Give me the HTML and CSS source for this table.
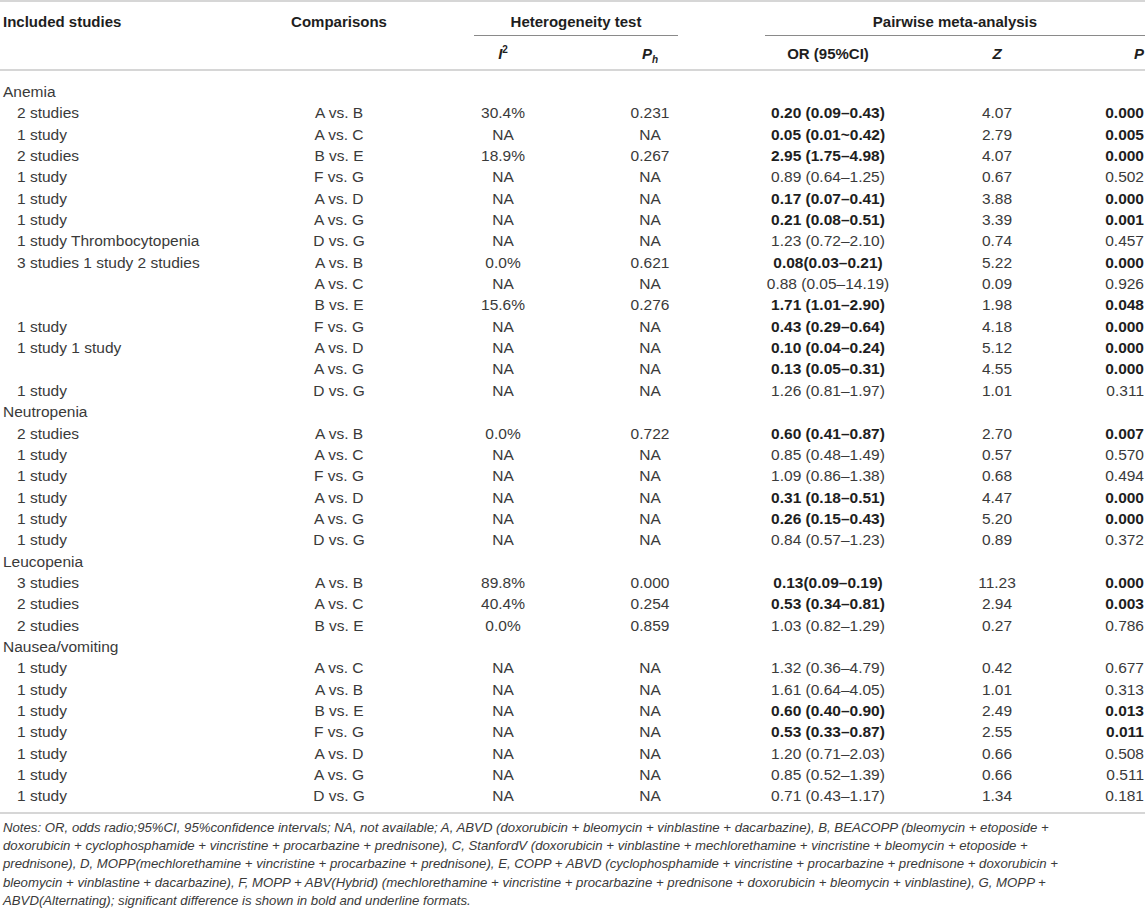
FILE: index.html
```html
<!DOCTYPE html>
<html lang="en">
<head>
    <meta charset="UTF-8">
    <title>Pairwise meta-analysis of adverse events</title>
    <link rel="stylesheet" href="styles.css">
</head>
<body>
    <table class="results">
        <colgroup>
            <col class="c-study">
            <col class="c-comp">
            <col class="c-i2">
            <col class="c-ph">
            <col class="c-or">
            <col class="c-z">
            <col class="c-p">
        </colgroup>
        <thead>
            <tr class="head-top">
                <th class="left">Included studies</th>
                <th>Comparisons</th>
                <th colspan="2"><div class="span-het">Heterogeneity test</div></th>
                <th colspan="3"><div class="span-pair">Pairwise meta-analysis</div></th>
            </tr>
            <tr class="head-sub">
                <th></th>
                <th></th>
                <th><i>I</i><sup>2</sup></th>
                <th><i>P</i><sub>h</sub></th>
                <th>OR (95%CI)</th>
                <th><i>Z</i></th>
                <th class="right"><i>P</i></th>
            </tr>
        </thead>
        <tbody>
            <tr class="group first"><td colspan="7">Anemia</td></tr>
            <tr><td class="sub">2 studies</td><td>A vs. B</td><td>30.4%</td><td>0.231</td><td><b>0.20 (0.09–0.43)</b></td><td>4.07</td><td class="right"><b>0.000</b></td></tr>
            <tr><td class="sub">1 study</td><td>A vs. C</td><td>NA</td><td>NA</td><td><b>0.05 (0.01~0.42)</b></td><td>2.79</td><td class="right"><b>0.005</b></td></tr>
            <tr><td class="sub">2 studies</td><td>B vs. E</td><td>18.9%</td><td>0.267</td><td><b>2.95 (1.75–4.98)</b></td><td>4.07</td><td class="right"><b>0.000</b></td></tr>
            <tr><td class="sub">1 study</td><td>F vs. G</td><td>NA</td><td>NA</td><td>0.89 (0.64–1.25)</td><td>0.67</td><td class="right">0.502</td></tr>
            <tr><td class="sub">1 study</td><td>A vs. D</td><td>NA</td><td>NA</td><td><b>0.17 (0.07–0.41)</b></td><td>3.88</td><td class="right"><b>0.000</b></td></tr>
            <tr><td class="sub">1 study</td><td>A vs. G</td><td>NA</td><td>NA</td><td><b>0.21 (0.08–0.51)</b></td><td>3.39</td><td class="right"><b>0.001</b></td></tr>
            <tr><td class="sub">1 study Thrombocytopenia</td><td>D vs. G</td><td>NA</td><td>NA</td><td>1.23 (0.72–2.10)</td><td>0.74</td><td class="right">0.457</td></tr>
            <tr><td class="sub">3 studies 1 study 2 studies</td><td>A vs. B</td><td>0.0%</td><td>0.621</td><td><b>0.08(0.03–0.21)</b></td><td>5.22</td><td class="right"><b>0.000</b></td></tr>
            <tr><td class="sub"></td><td>A vs. C</td><td>NA</td><td>NA</td><td>0.88 (0.05–14.19)</td><td>0.09</td><td class="right">0.926</td></tr>
            <tr><td class="sub"></td><td>B vs. E</td><td>15.6%</td><td>0.276</td><td><b>1.71 (1.01–2.90)</b></td><td>1.98</td><td class="right"><b>0.048</b></td></tr>
            <tr><td class="sub">1 study</td><td>F vs. G</td><td>NA</td><td>NA</td><td><b>0.43 (0.29–0.64)</b></td><td>4.18</td><td class="right"><b>0.000</b></td></tr>
            <tr><td class="sub">1 study 1 study</td><td>A vs. D</td><td>NA</td><td>NA</td><td><b>0.10 (0.04–0.24)</b></td><td>5.12</td><td class="right"><b>0.000</b></td></tr>
            <tr><td class="sub"></td><td>A vs. G</td><td>NA</td><td>NA</td><td><b>0.13 (0.05–0.31)</b></td><td>4.55</td><td class="right"><b>0.000</b></td></tr>
            <tr><td class="sub">1 study</td><td>D vs. G</td><td>NA</td><td>NA</td><td>1.26 (0.81–1.97)</td><td>1.01</td><td class="right">0.311</td></tr>

            <tr class="group"><td colspan="7">Neutropenia</td></tr>
            <tr><td class="sub">2 studies</td><td>A vs. B</td><td>0.0%</td><td>0.722</td><td><b>0.60 (0.41–0.87)</b></td><td>2.70</td><td class="right"><b>0.007</b></td></tr>
            <tr><td class="sub">1 study</td><td>A vs. C</td><td>NA</td><td>NA</td><td>0.85 (0.48–1.49)</td><td>0.57</td><td class="right">0.570</td></tr>
            <tr><td class="sub">1 study</td><td>F vs. G</td><td>NA</td><td>NA</td><td>1.09 (0.86–1.38)</td><td>0.68</td><td class="right">0.494</td></tr>
            <tr><td class="sub">1 study</td><td>A vs. D</td><td>NA</td><td>NA</td><td><b>0.31 (0.18–0.51)</b></td><td>4.47</td><td class="right"><b>0.000</b></td></tr>
            <tr><td class="sub">1 study</td><td>A vs. G</td><td>NA</td><td>NA</td><td><b>0.26 (0.15–0.43)</b></td><td>5.20</td><td class="right"><b>0.000</b></td></tr>
            <tr><td class="sub">1 study</td><td>D vs. G</td><td>NA</td><td>NA</td><td>0.84 (0.57–1.23)</td><td>0.89</td><td class="right">0.372</td></tr>

            <tr class="group"><td colspan="7">Leucopenia</td></tr>
            <tr><td class="sub">3 studies</td><td>A vs. B</td><td>89.8%</td><td>0.000</td><td><b>0.13(0.09–0.19)</b></td><td>11.23</td><td class="right"><b>0.000</b></td></tr>
            <tr><td class="sub">2 studies</td><td>A vs. C</td><td>40.4%</td><td>0.254</td><td><b>0.53 (0.34–0.81)</b></td><td>2.94</td><td class="right"><b>0.003</b></td></tr>
            <tr><td class="sub">2 studies</td><td>B vs. E</td><td>0.0%</td><td>0.859</td><td>1.03 (0.82–1.29)</td><td>0.27</td><td class="right">0.786</td></tr>

            <tr class="group"><td colspan="7">Nausea/vomiting</td></tr>
            <tr><td class="sub">1 study</td><td>A vs. C</td><td>NA</td><td>NA</td><td>1.32 (0.36–4.79)</td><td>0.42</td><td class="right">0.677</td></tr>
            <tr><td class="sub">1 study</td><td>A vs. B</td><td>NA</td><td>NA</td><td>1.61 (0.64–4.05)</td><td>1.01</td><td class="right">0.313</td></tr>
            <tr><td class="sub">1 study</td><td>B vs. E</td><td>NA</td><td>NA</td><td><b>0.60 (0.40–0.90)</b></td><td>2.49</td><td class="right"><b>0.013</b></td></tr>
            <tr><td class="sub">1 study</td><td>F vs. G</td><td>NA</td><td>NA</td><td><b>0.53 (0.33–0.87)</b></td><td>2.55</td><td class="right"><b>0.011</b></td></tr>
            <tr><td class="sub">1 study</td><td>A vs. D</td><td>NA</td><td>NA</td><td>1.20 (0.71–2.03)</td><td>0.66</td><td class="right">0.508</td></tr>
            <tr><td class="sub">1 study</td><td>A vs. G</td><td>NA</td><td>NA</td><td>0.85 (0.52–1.39)</td><td>0.66</td><td class="right">0.511</td></tr>
            <tr class="last"><td class="sub">1 study</td><td>D vs. G</td><td>NA</td><td>NA</td><td>0.71 (0.43–1.17)</td><td>1.34</td><td class="right">0.181</td></tr>
        </tbody>
    </table>

    <p class="notes">Notes: OR, odds radio;95%CI, 95%confidence intervals; NA, not available; A, ABVD (doxorubicin + bleomycin + vinblastine + dacarbazine), B, BEACOPP (bleomycin + etoposide + doxorubicin + cyclophosphamide + vincristine + procarbazine + prednisone), C, StanfordV (doxorubicin + vinblastine + mechlorethamine + vincristine + bleomycin + etoposide + prednisone), D, MOPP(mechlorethamine + vincristine + procarbazine + prednisone), E, COPP + ABVD (cyclophosphamide + vincristine + procarbazine + prednisone + doxorubicin + bleomycin + vinblastine + dacarbazine), F, MOPP + ABV(Hybrid) (mechlorethamine + vincristine + procarbazine + prednisone + doxorubicin + bleomycin + vinblastine), G, MOPP + ABVD(Alternating); significant difference is shown in bold and underline formats.</p>
</body>
</html>
```

FILE: styles.css
```css
body {
    margin: 0;
    background: #fff;
    color: #3a3a3a;
    font-family: 'Liberation Sans', Arial, Helvetica, sans-serif;
    font-size: 15px;
}
.results {
    width: 1145px;
    border-collapse: collapse;
    table-layout: fixed;
    border-top: 2px solid #d6d6d6;
}
.c-study { width: 260px; }
.c-comp { width: 158px; }
.c-i2 { width: 170px; }
.c-ph { width: 124px; }
.c-or { width: 232px; }
.c-z { width: 106px; }
.c-p { width: 95px; }
th, td {
    padding: 0;
    text-align: center;
    white-space: nowrap;
    font-weight: normal;
}
th {
    color: #1e1e1e;
    font-weight: bold;
    line-height: 20px;
}
.left { text-align: left; padding-left: 3px; }
.right { text-align: right; padding-right: 1px; }
.head-top th {
    padding-top: 10px;
    vertical-align: top;
}
.span-het {
    margin: 0 34px 0 56px;
    padding-bottom: 3px;
    border-bottom: 1px solid #8a8a8a;
}
.span-pair {
    margin-left: 53px;
    padding-bottom: 3px;
    border-bottom: 1px solid #8a8a8a;
}
.head-sub th {
    padding-top: 8px;
    padding-bottom: 5px;
    border-bottom: 2px solid #d6d6d6;
}
.head-sub sup {
    font-size: 10px;
    vertical-align: 6px;
    line-height: 0;
}
.head-sub sub {
    font-size: 10px;
    font-style: italic;
    vertical-align: -4px;
    line-height: 0;
}
td {
    font-size: 15.5px;
    line-height: 21.35px;
}
td b {
    color: #1e1e1e;
}
.group td {
    text-align: left;
    padding-left: 3px;
}
.first td {
    padding-top: 10px;
}
td.sub {
    text-align: left;
    padding-left: 17px;
}
.last td {
    padding-bottom: 5px;
    border-bottom: 2px solid #d6d6d6;
}
.notes {
    width: 1075px;
    margin: 5px 0 0 3px;
    font-size: 13.2px;
    font-style: italic;
    line-height: 18.3px;
    color: #3a3a3a;
}
```
